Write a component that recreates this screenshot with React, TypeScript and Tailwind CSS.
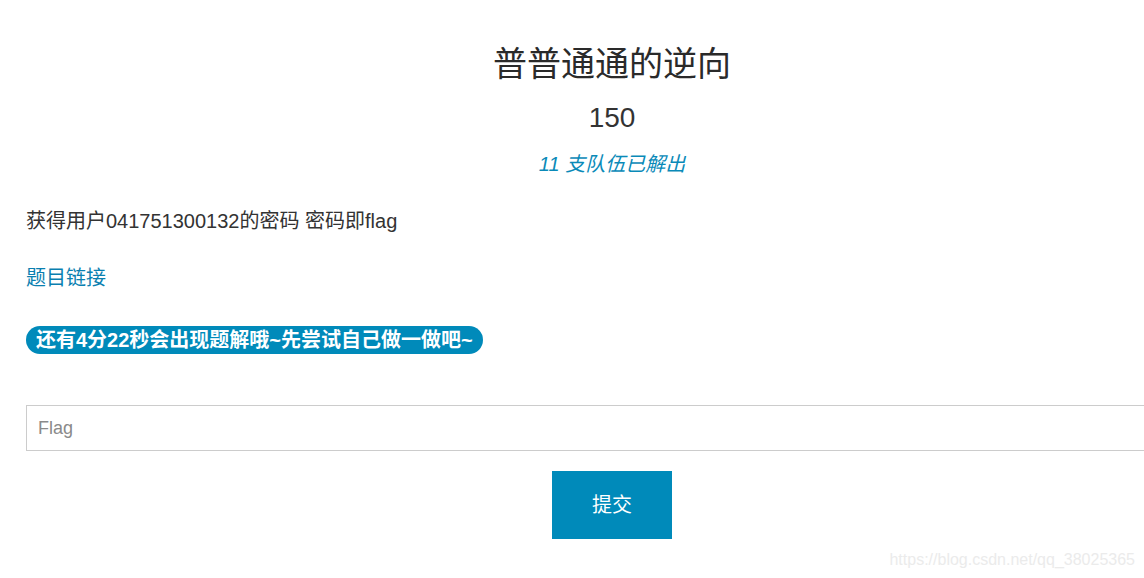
export default function App() {
  return (
    <div className="relative w-[1144px] h-[578px] overflow-hidden bg-white text-[#333] font-['Liberation_Sans','Noto_Sans_CJK_SC',sans-serif]">
      <div className="w-[1198px] pl-[26px] pt-[44px]">
        <div className="flex flex-col items-center">
          <h1 className="text-[34px] leading-[40px] font-normal text-[#2a2a2a]">普普通通的逆向</h1>
          <div className="mt-[17px] text-[28px] leading-[34px]">150</div>
          <div className="mt-[17px] text-[20px] leading-[24px] italic text-[#0a8ab8]">11 支队伍已解出</div>
        </div>

        <p className="mt-[31px] text-[20px] leading-[28px]">获得用户041751300132的密码 密码即flag</p>
        <a href="#" className="block mt-[29px] text-[20px] leading-[28px] text-[#0a7fb0] w-fit">
          题目链接
        </a>

        <div className="mt-[34px] flex">
          <span className="h-[28px] flex items-center rounded-full bg-[#008aba] px-[10px] text-[20px] font-bold text-white">
            还有4分22秒会出现题解哦~先尝试自己做一做吧~
          </span>
        </div>

        <input
          type="text"
          placeholder="Flag"
          className="mt-[51px] block w-full h-[46px] border border-[#cccccc] px-[11px] text-[18px] placeholder:text-[#8a8a8a] outline-none"
        />

        <div className="mt-[20px] flex justify-center">
          <button className="w-[120px] h-[68px] bg-[#008aba] text-white text-[20px]">提交</button>
        </div>
      </div>

      <div className="absolute right-[9px] bottom-[8px] text-[16px] leading-[20px] text-[#ebebeb]">
        https://blog.csdn.net/qq_38025365
      </div>
    </div>
  );
}
